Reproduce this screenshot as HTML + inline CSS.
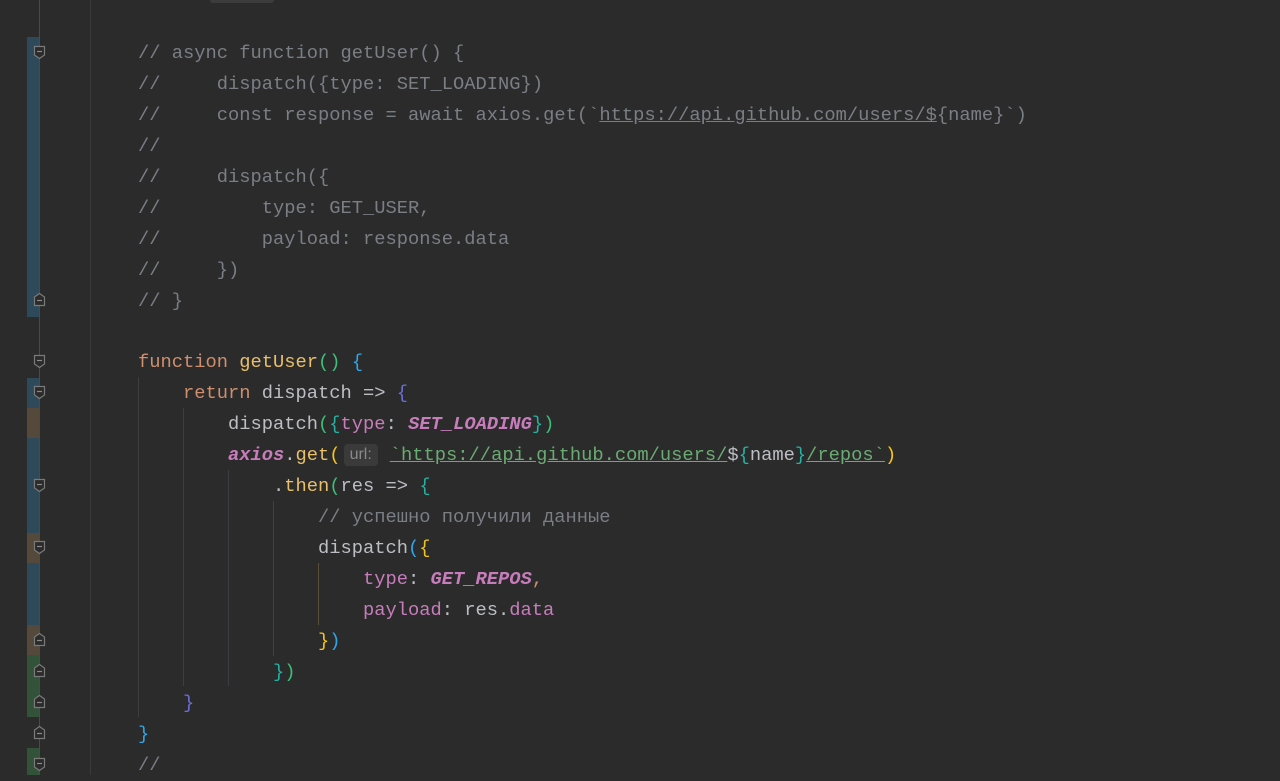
<!DOCTYPE html>
<html><head><meta charset="utf-8"><style>
body{margin:0;width:1280px;height:775px;background:#2b2b2b;overflow:hidden;position:relative;font-family:"Liberation Mono","DejaVu Sans Mono",monospace;font-size:18.75px;color:#bcbec4}
.l{position:absolute;left:0;height:31px;line-height:31px;white-space:pre;margin-top:1px}
.c{color:#7a7e85}
.k{color:#cf8e6d}
.f{color:#e8bf6a}
.p{color:#c77dbb;font-style:italic;font-weight:bold}
.pr{color:#c77dbb}
.s{color:#6aab73;text-decoration:underline;text-decoration-color:#6aab73}
.cu{text-decoration:underline}
.y{color:#f5c518}.b{color:#2fa7e8}.g{color:#3dbf7a}.t{color:#22b3a5}.v{color:#6b6fd6}
.hint{display:inline-block;background:#3a3a3a;color:#8a8a8a;font-family:"Liberation Sans",sans-serif;font-size:16px;line-height:22px;padding:0 6px;border-radius:4px;margin:0 12px 0 3px;vertical-align:1px}
.vl{position:absolute;width:1px;background:#3c3f41}
.gs{position:absolute;left:27px;width:12px}
.fm{position:absolute;left:33px;width:13px;height:15px}
</style></head><body>
<div class="vl" style="left:39px;top:0;height:775px;background:#4a4a4a"></div>
<div class="vl" style="left:90px;top:0;height:775px;background:#3a3a3a"></div>
<div style="position:absolute;left:210px;top:0;width:64px;height:3px;background:#3c3c3c;border-radius:0 0 3px 3px"></div>
<div class="gs" style="top:37px;height:280px;background:#2e4a5a"></div>
<div class="gs" style="top:378px;height:30px;background:#2e4a5a"></div>
<div class="gs" style="top:408px;height:30px;background:#54493a"></div>
<div class="gs" style="top:438px;height:95px;background:#2e4a5a"></div>
<div class="gs" style="top:533px;height:30px;background:#54493a"></div>
<div class="gs" style="top:563px;height:62px;background:#2e4a5a"></div>
<div class="gs" style="top:625px;height:30px;background:#54493a"></div>
<div class="gs" style="top:655px;height:62px;background:#33523a"></div>
<div class="gs" style="top:748px;height:27px;background:#33523a"></div>
<svg width="0" height="0" style="position:absolute"><defs>
<symbol id="o" viewBox="0 0 13 15"><path d="M1.5 1.5H11.5V10L6.5 13.5L1.5 10Z" fill="#2b2b2b" stroke="#7a7a7a" stroke-width="1.2"/><path d="M4 6.5H9" stroke="#8a8a8a" stroke-width="1.2"/></symbol>
<symbol id="e" viewBox="0 0 13 15"><path d="M1.5 13.5H11.5V5L6.5 1.5L1.5 5Z" fill="#2b2b2b" stroke="#7a7a7a" stroke-width="1.2"/><path d="M4 8.5H9" stroke="#8a8a8a" stroke-width="1.2"/></symbol>
</defs></svg>
<svg class="fm" style="top:45px"><use href="#o"/></svg>
<svg class="fm" style="top:292px"><use href="#e"/></svg>
<svg class="fm" style="top:354px"><use href="#o"/></svg>
<svg class="fm" style="top:385px"><use href="#o"/></svg>
<svg class="fm" style="top:478px"><use href="#o"/></svg>
<svg class="fm" style="top:540px"><use href="#o"/></svg>
<svg class="fm" style="top:632px"><use href="#e"/></svg>
<svg class="fm" style="top:663px"><use href="#e"/></svg>
<svg class="fm" style="top:694px"><use href="#e"/></svg>
<svg class="fm" style="top:725px"><use href="#e"/></svg>
<svg class="fm" style="top:757px"><use href="#o"/></svg>
<div class="vl" style="left:138px;top:377px;height:340px"></div>
<div class="vl" style="left:183px;top:408px;height:278px"></div>
<div class="vl" style="left:228px;top:470px;height:216px"></div>
<div class="vl" style="left:273px;top:501px;height:155px;background:#2f4a40"></div>
<div class="vl" style="left:318px;top:563px;height:62px;background:#5a4d35"></div>
<div class="l" style="top:37px;left:138px"><span class="c">// async function getUser() {</span></div>
<div class="l" style="top:68px;left:138px"><span class="c">//     dispatch({type: SET_LOADING})</span></div>
<div class="l" style="top:99px;left:138px"><span class="c">//     const response = await axios.get(`<span class="cu">https://api.github.com/users/$</span>{name}`)</span></div>
<div class="l" style="top:130px;left:138px"><span class="c">//</span></div>
<div class="l" style="top:161px;left:138px"><span class="c">//     dispatch({</span></div>
<div class="l" style="top:192px;left:138px"><span class="c">//         type: GET_USER,</span></div>
<div class="l" style="top:223px;left:138px"><span class="c">//         payload: response.data</span></div>
<div class="l" style="top:254px;left:138px"><span class="c">//     })</span></div>
<div class="l" style="top:285px;left:138px"><span class="c">// }</span></div>
<div class="l" style="top:346px;left:138px"><span class="k">function</span> <span class="f">getUser</span><span class="g">()</span> <span class="b">{</span></div>
<div class="l" style="top:377px;left:183px"><span class="k">return</span> dispatch =&gt; <span class="v">{</span></div>
<div class="l" style="top:408px;left:228px">dispatch<span class="g">(</span><span class="t">{</span><span class="pr">type</span>: <span class="p">SET_LOADING</span><span class="t">}</span><span class="g">)</span></div>
<div class="l" style="top:439px;left:228px"><span class="p">axios</span>.<span class="f">get</span><span class="y">(</span><span class="hint">url:</span><span class="s">`https://api.github.com/users/</span>$<span class="t">{</span>name<span class="t">}</span><span class="s">/repos`</span><span class="y">)</span></div>
<div class="l" style="top:470px;left:273px">.<span class="f">then</span><span class="g">(</span>res =&gt; <span class="t">{</span></div>
<div class="l" style="top:501px;left:318px"><span class="c">// успешно получили данные</span></div>
<div class="l" style="top:532px;left:318px">dispatch<span class="b">(</span><span class="y">{</span></div>
<div class="l" style="top:563px;left:363px"><span class="pr">type</span>: <span class="p">GET_REPOS</span><span class="k">,</span></div>
<div class="l" style="top:594px;left:363px"><span class="pr">payload</span>: res.<span class="pr">data</span></div>
<div class="l" style="top:625px;left:318px"><span class="y">}</span><span class="b">)</span></div>
<div class="l" style="top:656px;left:273px"><span class="t">}</span><span class="g">)</span></div>
<div class="l" style="top:687px;left:183px"><span class="v">}</span></div>
<div class="l" style="top:718px;left:138px"><span class="b">}</span></div>
<div class="l" style="top:749px;left:138px"><span class="c">//</span></div>
</body></html>
